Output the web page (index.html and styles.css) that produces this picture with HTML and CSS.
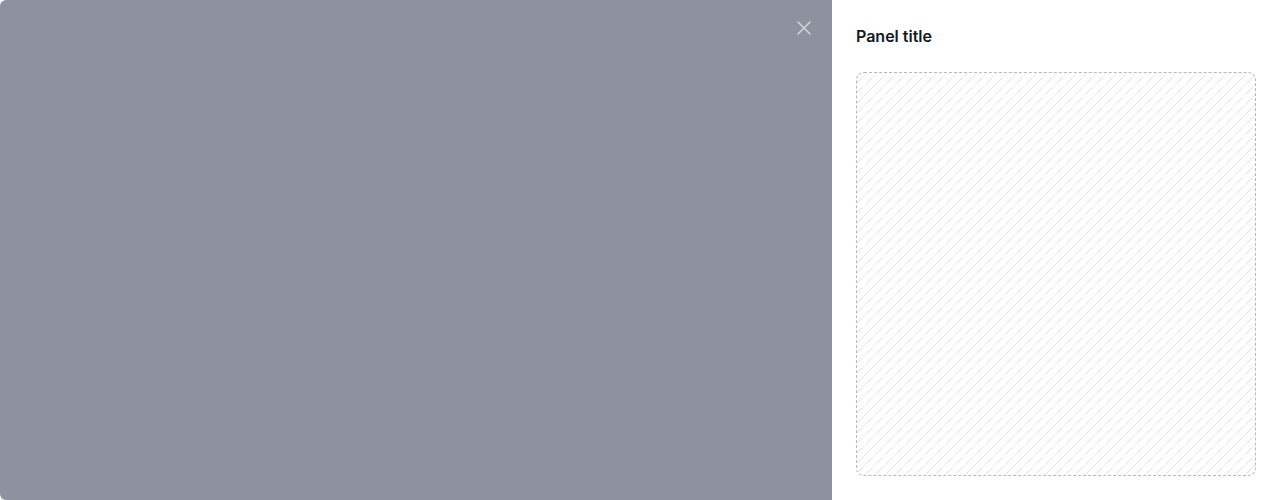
FILE: index.html
```html
<!DOCTYPE html>
<html lang="en">
<head>
<meta charset="utf-8">
<title>Slide-over</title>
<link rel="stylesheet" href="styles.css">
</head>
<body>
<div class="screen">
  <div class="backdrop"></div>
  <aside class="panel">
    <div class="close-wrap">
      <button class="close" type="button" aria-label="Close panel">
        <svg viewBox="0 0 24 24" fill="none" stroke="currentColor" stroke-width="1.5" width="24" height="24" aria-hidden="true">
          <path stroke-linecap="round" stroke-linejoin="round" d="M6 18 18 6M6 6l12 12"/>
        </svg>
      </button>
    </div>
    <div class="panel-inner">
      <h2 class="panel-title">Panel title</h2>
      <div class="panel-body">
        <div class="placeholder">
          <svg class="hatch" fill="none" aria-hidden="true">
            <defs>
              <pattern id="hatch-pattern" x="0" y="0" width="10" height="10" patternUnits="userSpaceOnUse">
                <path d="M-3 13 15-5M-5 5l10-10M-5 15l10-10"/>
              </pattern>
            </defs>
            <rect stroke="none" fill="url(#hatch-pattern)" width="100%" height="100%"/>
          </svg>
        </div>
      </div>
    </div>
  </aside>
</div>
</body>
</html>
```

FILE: styles.css
```css
* { box-sizing: border-box; }
html, body { margin: 0; padding: 0; height: 100%; background: #fff; }
body { font-family: Inter, "Noto Sans", sans-serif; }

.screen {
  display: flex;
  width: 1280px;
  height: 500px;
  overflow: hidden;
  border-radius: 6px;
  background: #fff;
}

.backdrop {
  flex: 1;
  background: rgb(142, 146, 158);
}

.panel {
  position: relative;
  width: 448px;
  height: 100%;
  background: #fff;
}

.close-wrap {
  position: absolute;
  top: 0;
  left: -40px;
  padding: 16px 16px 0 0;
}

.close {
  display: block;
  padding: 0;
  margin: 0;
  border: 0;
  background: transparent;
  color: #d1d5db;
  width: 24px;
  height: 24px;
  cursor: pointer;
}
.close svg { display: block; }

.panel-inner {
  display: flex;
  flex-direction: column;
  height: 100%;
  padding: 24px 24px 24px;
}

.panel-title {
  margin: 0;
  font-size: 16px;
  line-height: 24px;
  font-weight: 600;
  color: #111827;
}

.panel-body {
  flex: 1;
  display: flex;
  margin-top: 24px;
}

.placeholder {
  position: relative;
  flex: 1;
  overflow: hidden;
  border: 1px dashed #b4b8c0;
  border-radius: 8px;
}

.hatch {
  position: absolute;
  inset: 0;
  width: 100%;
  height: 100%;
  stroke: rgba(17, 24, 39, 0.08);
}
```
